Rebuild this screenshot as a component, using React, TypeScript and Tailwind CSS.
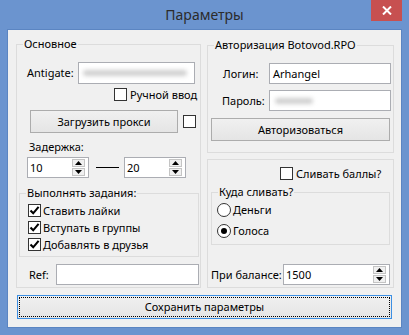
import React from "react";

const FONT = "font-['Noto_Sans','Open_Sans','Liberation_Sans',sans-serif]";

function Check({ checked }: { checked?: boolean }) {
  return (
    <div className="w-[13px] h-[13px] border border-[#333333] bg-white flex items-center justify-center shrink-0">
      {checked && (
        <svg width="11" height="11" viewBox="0 0 11 11">
          <path d="M1.5 5.5 L4.2 8.3 L9.6 1.8" stroke="#000" strokeWidth="2.1" fill="none" />
        </svg>
      )}
    </div>
  );
}

function Radio({ selected }: { selected?: boolean }) {
  return (
    <div className="w-[14px] h-[14px] rounded-full border border-[#333333] bg-white flex items-center justify-center shrink-0">
      {selected && <div className="w-[6px] h-[6px] rounded-full bg-black" />}
    </div>
  );
}

function Group({
  title,
  className,
  children,
}: {
  title: string;
  className: string;
  children?: React.ReactNode;
}) {
  return (
    <div className={`relative border border-[#dcdcdc] flex flex-col ${className}`}>
      <span className="absolute left-[6px] -top-[9px] bg-[#f0f0f0] px-[1px] leading-[16px] whitespace-nowrap">
        {title}
      </span>
      {children}
    </div>
  );
}

function Button({ label, className }: { label: string; className: string }) {
  return (
    <div
      className={`border border-[#acacac] bg-linear-to-b from-[#f0f0f0] to-[#e5e5e5] flex items-center justify-center shrink-0 ${className}`}
    >
      {label}
    </div>
  );
}

function Spin() {
  return (
    <div className="flex flex-col gap-[1px] mr-[3px]">
      <div className="w-[13px] h-[8px] border border-[#c4c4c4] bg-[#f0f0f0] flex items-center justify-center">
        <svg width="7" height="4" viewBox="0 0 7 4">
          <path d="M0 4 L3.5 0 L7 4 Z" fill="#000" />
        </svg>
      </div>
      <div className="w-[13px] h-[8px] border border-[#c4c4c4] bg-[#f0f0f0] flex items-center justify-center">
        <svg width="7" height="4" viewBox="0 0 7 4">
          <path d="M0 0 L3.5 4 L7 0 Z" fill="#000" />
        </svg>
      </div>
    </div>
  );
}

function SpinBox({ value, className }: { value: string; className: string }) {
  return (
    <div className={`border border-[#abadb3] bg-white flex items-center justify-between shrink-0 ${className}`}>
      <span className="pl-[2px]">{value}</span>
      <Spin />
    </div>
  );
}

export default function App() {
  return (
    <div className={`w-[409px] h-[335px] bg-[#6b94cf] flex flex-col items-center text-[11px] leading-[16px] text-black ${FONT}`}>
      {/* title bar */}
      <div className="w-full h-[29px] relative flex items-center justify-center shrink-0">
        <span className="text-[14px] text-[#2b2b2b] leading-[20px] mt-[1px]">Параметры</span>
        <div className="absolute right-[7px] top-0 w-[31px] h-[21px] bg-[#c75050] flex items-center justify-center">
          <svg width="10" height="9" viewBox="0 0 10 9">
            <path d="M1 0.5 L9 8.5 M9 0.5 L1 8.5" stroke="#fff" strokeWidth="2" />
          </svg>
        </div>
      </div>

      {/* client */}
      <div className="w-[395px] h-[299px] border border-[#5b85c2] bg-[#f0f0f0] flex flex-col shrink-0">
        <div className="flex pl-[8px] pt-[14px]">
          {/* left group */}
          <Group title="Основное" className="w-[185px] h-[244px]">
            <div className="flex items-center mt-[17px]">
              <span className="ml-[10px] w-[51px]">Antigate:</span>
              <div className="w-[117px] h-[22px] border border-[#abadb3] bg-white flex items-center">
                <div className="ml-[4px] w-[104px] h-[6px] rounded-full bg-[#cfcfcf] blur-[2px]" />
              </div>
            </div>
            <div className="flex items-center mt-[4px] ml-[97px] h-[13px]">
              <Check />
              <span className="ml-[3px] whitespace-nowrap">Ручной ввод</span>
            </div>
            <div className="flex items-center mt-[9px]">
              <Button label="Загрузить прокси" className="ml-[13px] w-[148px] h-[23px]" />
              <div className="ml-[5px]">
                <Check />
              </div>
            </div>
            <div className="mt-[6px] ml-[12px] h-[16px]">Задержка:</div>
            <div className="flex items-center mt-[2px]">
              <SpinBox value="10" className="ml-[10px] w-[62px] h-[21px]" />
              <div className="ml-[7px] w-[23px] h-[1px] bg-black" />
              <SpinBox value="20" className="ml-[5px] w-[62px] h-[21px]" />
            </div>
            <Group title="Выполнять задания:" className="mt-[15px] ml-[2px] w-[180px] h-[64px]">
              <div className="flex flex-col gap-[4px] mt-[10px] ml-[8px]">
                {["Ставить лайки", "Вступать в группы", "Добавлять в друзья"].map((t) => (
                  <div key={t} className="flex items-center h-[13px]">
                    <Check checked />
                    <span className="ml-[2px] whitespace-nowrap">{t}</span>
                  </div>
                ))}
              </div>
            </Group>
            <div className="flex items-center mt-[7px]">
              <span className="ml-[12px] w-[27px]">Ref:</span>
              <div className="w-[143px] h-[21px] border border-[#abadb3] bg-white" />
            </div>
          </Group>

          {/* right column */}
          <div className="ml-[6px] w-[187px] flex flex-col">
            <Group title="Авторизация Botovod.RPO" className="mt-[1px] w-[187px] h-[108px]">
              <div className="flex items-center mt-[17px]">
                <span className="ml-[15px] w-[46px]">Логин:</span>
                <div className="w-[122px] h-[21px] border border-[#abadb3] bg-white flex items-center pl-[3px]">
                  Arhangel
                </div>
              </div>
              <div className="flex items-center mt-[6px]">
                <span className="ml-[14px] w-[47px]">Пароль:</span>
                <div className="w-[122px] h-[21px] border border-[#abadb3] bg-white flex items-center">
                  <div className="ml-[5px] w-[38px] h-[6px] rounded-full bg-[#cfcfcf] blur-[2px]" />
                </div>
              </div>
              <Button label="Авторизоваться" className="mt-[7px] ml-[3px] w-[179px] h-[23px]" />
            </Group>

            <div className="mt-[6px] w-[187px] h-[129px] border border-[#dcdcdc] flex flex-col">
              <div className="flex items-center mt-[7px] ml-[72px] h-[13px]">
                <Check />
                <span className="ml-[3px] whitespace-nowrap">Сливать баллы?</span>
              </div>
              <Group title="Куда сливать?" className="mt-[12px] ml-[3px] w-[179px] h-[53px]">
                <div className="flex items-center mt-[10px] ml-[5px] h-[14px]">
                  <Radio />
                  <span className="ml-[2px]">Деньги</span>
                </div>
                <div className="flex items-center mt-[7px] ml-[5px] h-[14px]">
                  <Radio selected />
                  <span className="ml-[2px]">Голоса</span>
                </div>
              </Group>
              <div className="flex items-center mt-[19px]">
                <span className="ml-[3px] w-[72px] whitespace-nowrap">При балансе:</span>
                <SpinBox value="1500" className="w-[107px] h-[21px]" />
              </div>
            </div>
          </div>
        </div>

        {/* save button */}
        <div className="mt-[7px] ml-[9px] w-[375px] h-[24px] border border-[#3c8fe3] bg-linear-to-b from-[#f0f0f0] to-[#e5e5e5] p-[1px]">
          <div className="w-full h-full border border-dotted border-black flex items-center justify-center">
            Сохранить параметры
          </div>
        </div>
      </div>
    </div>
  );
}
